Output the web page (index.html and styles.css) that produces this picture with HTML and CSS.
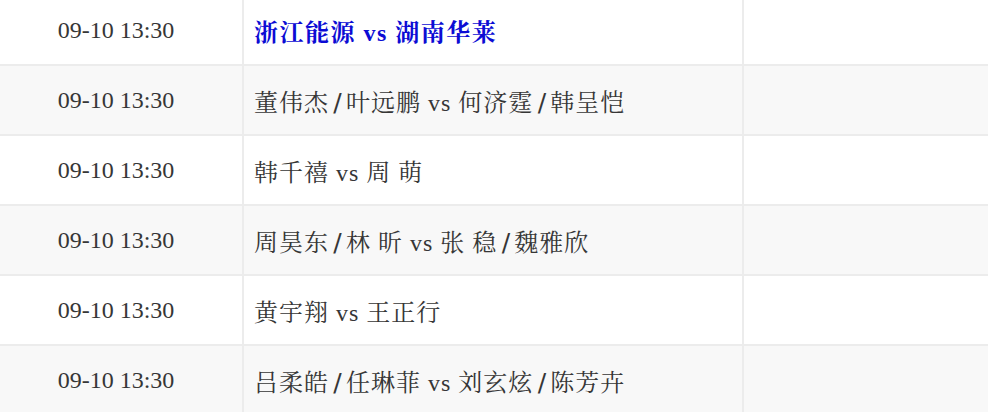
FILE: index.html
```html
<!DOCTYPE html>
<html>
<head>
<meta charset="utf-8">
<link rel="stylesheet" href="styles.css">
</head>
<body>
<table class="schedule">
  <colgroup><col class="c-time"><col class="c-match"><col class="c-extra"></colgroup>
  <tbody>
    <tr><td class="time">09-10 13:30</td><td class="match"><a class="team" href="#">浙江能源 vs 湖南华莱</a></td><td></td></tr>
    <tr><td class="time">09-10 13:30</td><td class="match">董伟杰<span class="sep">/</span>叶远鹏 vs 何济霆<span class="sep">/</span>韩呈恺</td><td></td></tr>
    <tr><td class="time">09-10 13:30</td><td class="match">韩千禧 vs 周 萌</td><td></td></tr>
    <tr><td class="time">09-10 13:30</td><td class="match">周昊东<span class="sep">/</span>林 昕 vs 张 稳<span class="sep">/</span>魏雅欣</td><td></td></tr>
    <tr><td class="time">09-10 13:30</td><td class="match">黄宇翔 vs 王正行</td><td></td></tr>
    <tr><td class="time">09-10 13:30</td><td class="match">吕柔皓<span class="sep">/</span>任琳菲 vs 刘玄炫<span class="sep">/</span>陈芳卉</td><td></td></tr>
  </tbody>
</table>
</body>
</html>
```
FILE: styles.css
```css
html, body {
  margin: 0;
  padding: 0;
  background: #fff;
}
.schedule {
  width: 990px;
  margin-top: -4px;
  border-collapse: collapse;
  table-layout: fixed;
  font-family: "Liberation Serif", "Noto Serif CJK SC", "Noto Sans CJK SC", serif;
  font-size: 24px;
  color: #363636;
}
.c-time { width: 243px; }
.c-match { width: 500px; }
.schedule td {
  height: 68px;
  padding: 0 10px;
  border: 2px solid #ececec;
  border-top: 0;
  vertical-align: middle;
}
.schedule td:first-child { border-left: 0; }
.schedule tr:nth-child(even) td { background: #f8f8f8; }
.schedule td.time {
  text-align: center;
  padding: 0 20px 0 10px;
}
.match {
  text-align: left;
  letter-spacing: 1px;
}
.sep {
  display: inline-block;
  width: 17px;
  text-align: center;
  letter-spacing: 0;
  font-family: "DejaVu Sans", sans-serif;
  font-size: 25px;
}
.team {
  color: #0c0cd4;
  font-weight: bold;
  text-decoration: none;
  letter-spacing: 1.5px;
}
```
